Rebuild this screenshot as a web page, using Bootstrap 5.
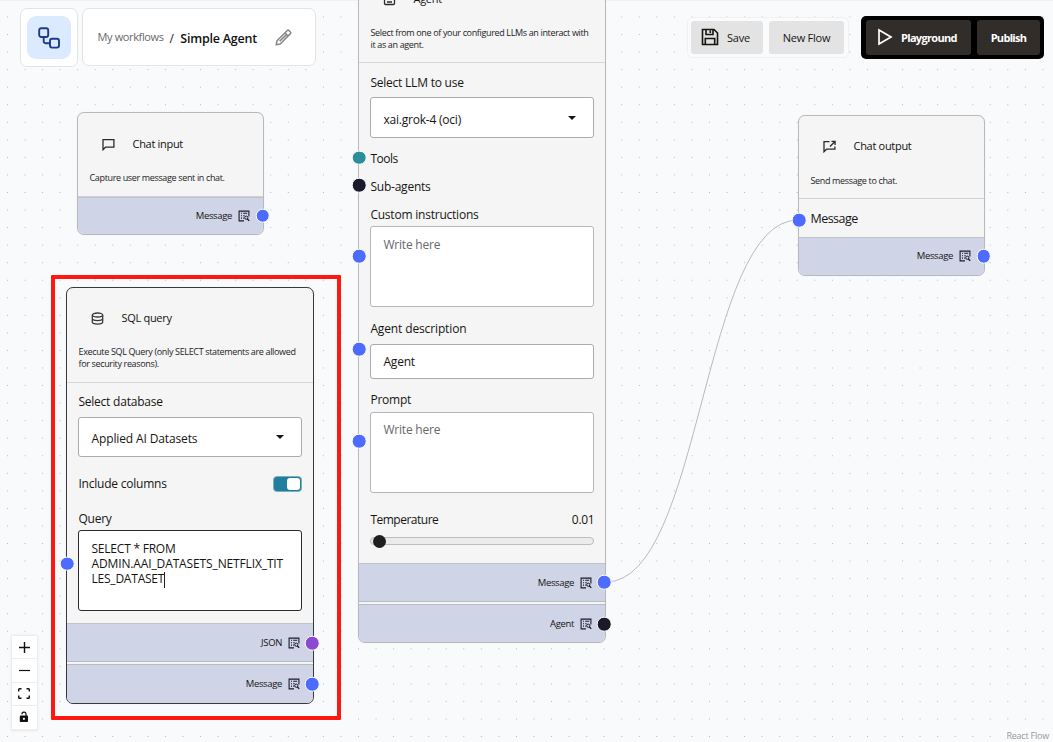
<!DOCTYPE html>
<html lang="en">
<head>
<meta charset="utf-8">
<meta name="viewport" content="width=device-width, initial-scale=1">
<title>Simple Agent</title>
<link rel="stylesheet" href="https://cdn.jsdelivr.net/npm/bootstrap@5.3.0/dist/css/bootstrap.min.css">
<style>
body{font-family:"Open Sans","Noto Sans",sans-serif;font-size:12px;line-height:16px;letter-spacing:-.22px;color:#161513;background:#f9fafb}
.canvas{height:742px;background:#f9fafc}
.canvas::before{content:"";position:absolute;inset:0 0 auto;height:1px;background:#f0f1f3}
.ls-wide{letter-spacing:-.13px}.ls-tight{letter-spacing:-.5px}
.edges{inset:0;width:1053px;height:742px;pointer-events:none}
/* toolbar */
.crumbs{left:20px;top:8px;gap:4px}
.panel{background:#fff;border:1px solid #e3e4e6;border-radius:7px}
.logo-box{width:58px;height:59px}
.logo-tile{width:44px;height:43px;border-radius:9px;background:#dbeafe}
.crumb-box{width:234px;height:58px;padding:0 23px 0 14.5px}
.crumb-link{font-size:11px;letter-spacing:-.37px;color:#66686c}
.crumb-sep{margin:3px 6.5px 0 6px}
.crumb-now{font-size:12.5px;font-weight:600;letter-spacing:-.22px;color:#111}
.tools-light{left:687px;top:17px;width:162px;height:41px;padding:3px;gap:6px;border:1px solid #f1f1f3;border-radius:6px;background:#fafbfc}
.tools-dark{left:861px;top:16px;width:183px;height:43px;padding:4px 4px 4px 5px;gap:6px;background:#000;border-radius:5px}
.tool{--bs-btn-font-size:11px;--bs-btn-font-weight:500;--bs-btn-padding-x:0;--bs-btn-padding-y:2px;--bs-btn-border-width:0;--bs-btn-border-radius:3px;padding-bottom:0;letter-spacing:-.25px}
.tool-light,.tool-light:hover{background:#e3e3e3;color:#161513}
.tool-dark,.tool-dark:hover{background:#312d2a;color:#fff;font-weight:700;letter-spacing:-.68px}
/* nodes */
.node{background:#f5f5f5;border:1px solid #b9b9bb;border-radius:7px;box-shadow:0 0 1px rgba(0,0,0,.12)}
.node.selected{border-color:#3a3a3c}
.node-head{height:84px;border-bottom:1px solid #d0d1d3;padding:0 11.5px}
.node-head.tall{height:95px;border-bottom-color:#d6d7d9}
.node-title{height:62px;padding-left:12px;gap:18px;font-size:11px;font-weight:500;letter-spacing:-.3px;color:#111}
.raised .node-title{height:60px}
.raised .node-desc{margin-top:-1.500px}
.selected .node-desc{margin-top:-2px}
.node-desc{font-size:9px;line-height:12px;letter-spacing:-.35px;color:#1c1c1e;white-space:nowrap;margin-top:-3px}
.node-body{padding:0 11px}
.node-body>div:not(.field):not(.track){position:relative;top:.5px;left:.4px}
.field{background:#fff;border:1px solid #aaabad;border-radius:3px;padding:0 12.5px}
.field-area{height:81px;padding-top:10px;line-height:16px;border-color:#b5b6b8}
.field-focus{border-color:#2b2b2d}
.ph{color:#66686a}
.caret{width:0;border:4px solid transparent;border-top:4.5px solid #161513;border-bottom:0;margin:-4px 5px 0 0}
.cursor{display:inline-block;width:1px;height:16px;margin-bottom:-2px;background:#222;vertical-align:-3px}
.out{background:#d0d4e7;border-top:1px solid #c1c3cb;font-size:9.5px;letter-spacing:-.35px;gap:6px;padding-right:13px}
.out + .out{border-top-color:#b9bbc4}
.out:last-of-type{border-radius:0 0 6px 6px}
.out-mid{border-bottom:1px solid #b9bbc4}
.port{width:14.6px;height:14.6px;border:1px solid #fff;border-radius:50%;background:#4d6bfe;transform:translate(-50%,-50%)}
.port.teal{background:#2b8f9a}.port.dark{background:#1a1a2b}.port.purple{background:#8b4bd0}
.switch{width:29px;height:16px;border:1px solid #7aaebf;border-radius:4px;background:#227e9e}
.knob{width:13px;height:12px;border-radius:3px;background:#fff;margin:1px}
.track{height:8px;border:1px solid #bdbdbf;border-radius:4px;background:#ebebeb}
.thumb{width:13px;height:13px;border-radius:50%;background:#1f1f1f;left:2px;top:-3.5px}
.marker{left:51px;top:275px;width:290px;height:445px;border:4px solid #fe1811;pointer-events:none;border-radius:1px}
.zoomer{left:12px;top:636px;width:24.5px;box-shadow:0 0 2px 1px rgba(0,0,0,.08)}
.zoomer div{height:23.4px;background:#fff;border-bottom:1px solid #eee}
.credit{right:0;bottom:0;padding:1px 4px 0 3px;line-height:13px;font-size:9px;color:#999;background:#fafbfc}
</style>
</head>
<body class="m-0 overflow-hidden">
<svg class="d-none">
  <symbol id="peek" viewBox="0 0 12 12"><path d="M10.900 6.500V1.100H1.100v9.800H6M3 3.300h1M5.200 3.300h4M3 5.700h1M5.200 5.700h1.500M3 8.100h1M5.200 8.100h1" fill="none" stroke="#161b26" stroke-width="1.100"/><circle cx="8.300" cy="7.700" r="1.600" fill="none" stroke="#161b26"/><path d="M9.300 8.800l1.900 2.100" stroke="#161b26" stroke-width="1.300"/></symbol>
</svg>
<main class="canvas position-relative overflow-hidden">
  <svg class="edges position-absolute" fill="none">
    <defs><pattern id="dots" width="17.550" height="17.550" patternUnits="userSpaceOnUse" x="7" y="16.500"><circle cx=".5" cy=".5" r=".5" fill="#9fa1a8"/></pattern></defs>
    <rect width="1053" height="742" fill="url(#dots)"/>
    <path d="M606 582C702 582 702 220 798 220" stroke="#b9babf"/>
  </svg>

  <header class="crumbs position-absolute d-flex align-items-start">
    <div class="panel logo-box d-flex align-items-center justify-content-center">
      <div class="logo-tile d-flex align-items-center justify-content-center">
        <svg width="22" height="22" viewBox="0 0 22 22" fill="none" stroke="#1e3a8a" stroke-width="1.900"><rect x="1.200" y="1.200" width="9" height="8.800" rx="2"/><rect x="12" y="11.800" width="9" height="8.800" rx="2"/><path d="M5.700 10v4.200a2 2 0 0 0 2 2H12"/></svg>
      </div>
    </div>
    <div class="panel crumb-box d-flex align-items-center">
      <span class="crumb-link">My workflows</span><span class="crumb-sep">/</span><span class="crumb-now mt-1">Simple Agent</span>
      <svg class="ms-auto" width="17" height="17" viewBox="0 0 17 17" fill="none" stroke="#858588" stroke-width="1.500" stroke-linejoin="round"><path d="M1.200 15.800l.8-4L12.300 1.500q.8-.7 1.600 0l1.500 1.500q.7.8 0 1.600L5.200 15zM10 4l3 3M4.600 12.300l6.300-6.200"/></svg>
    </div>
  </header>

  <div class="tools-light position-absolute d-flex">
    <button class="btn tool tool-light d-flex align-items-center" style="width:72px;padding-left:10px;gap:8px">
      <svg style="margin-top:-3px" width="18" height="18" viewBox="0 0 18 18" fill="none" stroke="#161513" stroke-width="1.600"><path d="M1.500 1.500h11.500l3.500 3.500v11.500h-15zM5 1.500v5h7v-5M9.300 2.500v2.500M4.300 16.500v-6h9.400v6"/></svg>Save</button>
    <button class="btn tool tool-light" style="width:75px">New Flow</button>
  </div>
  <div class="tools-dark position-absolute d-flex">
    <button class="btn tool tool-dark d-flex align-items-center" style="width:105px;padding-left:11px;gap:8px">
      <svg style="margin-top:-3px" width="16" height="18" viewBox="0 0 16 18" fill="none" stroke="#fff" stroke-width="1.700"><path d="M2 2L14 9 2 16z"/></svg>Playground</button>
    <button class="btn tool tool-dark" style="width:63px">Publish</button>
  </div>

  <section class="node position-absolute" style="left:77px;top:112px;width:187px;height:123px">
    <div class="node-head">
      <div class="node-title d-flex align-items-center">
        <svg width="13" height="13" viewBox="0 0 13 13" fill="none" stroke="#2b2b2d" stroke-width="1.300"><path d="M1 11.700V1.700h10.900v7.500H3.500z"/></svg>Chat input</div>
      <div class="node-desc">Capture user message sent in chat.</div>
    </div>
    <div class="out d-flex align-items-center justify-content-end" style="height:37px">Message<svg width="12" height="12"><use href="#peek"/></svg></div>
    <i class="port position-absolute" style="left:184.700px;top:102.500px"></i>
  </section>

  <section class="node position-absolute" style="left:358px;top:-33px;width:248px;height:676px">
    <div class="node-head tall">
      <div class="node-title d-flex align-items-center">
        <svg width="13" height="13" viewBox="0 0 13 13" fill="none" stroke="#2b2b2d" stroke-width="1.300"><rect x="1.500" y="3" width="10" height="8.500" rx="1"/><path d="M6.500 0v3M4.500 6v1M8.500 6v1M4 9h5"/></svg>Agent</div>
      <div class="node-desc">Select from one of your configured LLMs an interact with<br>it as an agent.</div>
    </div>
    <div class="node-body" style="height:500px;padding-top:11px">
      <div>Select LLM to use</div>
      <div class="field d-flex align-items-center justify-content-between" style="height:41px;margin-top:7px;padding-top:4px"><span>xai.grok-4 (oci)</span><i class="caret"></i></div>
      <div class="ls-tight" style="margin-top:12px">Tools</div>
      <div style="margin-top:12px">Sub-agents</div>
      <div style="margin-top:12px">Custom instructions</div>
      <div class="field field-area ph" style="margin-top:4px">Write here</div>
      <div class="ls-wide" style="margin-top:13px">Agent description</div>
      <div class="field d-flex align-items-center" style="height:35px;margin-top:8px;padding-top:1px">Agent</div>
      <div style="margin-top:12px">Prompt</div>
      <div class="field field-area ph" style="margin-top:5px;padding-top:9px">Write here</div>
      <div class="d-flex justify-content-between ls-tight" style="margin-top:18px"><span>Temperature</span><span style="letter-spacing:-.3px">0.01</span></div>
      <div class="track position-relative" style="margin-top:10px"><i class="thumb position-absolute"></i></div>
    </div>
    <div class="out out-mid d-flex align-items-center justify-content-end" style="height:39px">Message<svg width="12" height="12"><use href="#peek"/></svg></div>
    <div class="out d-flex align-items-center justify-content-end" style="height:38px;margin-top:2px">Agent<svg width="12" height="12"><use href="#peek"/></svg></div>
    <i class="port teal position-absolute" style="left:0;top:189.500px"></i>
    <i class="port dark position-absolute" style="left:0;top:217px"></i>
    <i class="port position-absolute" style="left:0;top:288.300px"></i>
    <i class="port position-absolute" style="left:0;top:381px"></i>
    <i class="port position-absolute" style="left:0;top:473.300px"></i>
    <i class="port position-absolute" style="left:245.300px;top:614.300px"></i>
    <i class="port dark position-absolute" style="left:245.300px;top:656px"></i>
  </section>

  <section class="node raised position-absolute" style="left:798px;top:115px;width:187px;height:161px">
    <div class="node-head" style="height:83px">
      <div class="node-title d-flex align-items-center">
        <svg width="13" height="13" viewBox="0 0 13 13" fill="none" stroke="#2b2b2d" stroke-width="1.300"><path d="M6.500 1.700H1v10l2.500-2.500h8.400V6.500M7 6.500L11.700 1.700M8.500 1.400h3.600V5"/></svg>Chat output</div>
      <div class="node-desc">Send message to chat.</div>
    </div>
    <div class="node-body d-flex align-items-center ls-tight" style="height:38px;font-size:12.500px"><div>Message</div></div>
    <div class="out d-flex align-items-center justify-content-end" style="height:38px;padding-bottom:1px">Message<svg width="12" height="12"><use href="#peek"/></svg></div>
    <i class="port position-absolute" style="left:0;top:104px"></i>
    <i class="port position-absolute" style="left:184.500px;top:140.300px"></i>
  </section>

  <section class="node raised selected position-absolute" style="left:66px;top:287px;width:248px;height:417px">
    <div class="node-head tall">
      <div class="node-title d-flex align-items-center">
        <svg width="13" height="13" viewBox="0 0 13 13" fill="none" stroke="#3a3a3c" stroke-width="1.300"><ellipse cx="6.500" cy="3" rx="5.200" ry="2"/><path d="M1.300 3v7c0 2.700 10.400 2.700 10.400 0V3M1.300 6.500c0 2.700 10.400 2.700 10.400 0"/></svg>SQL query</div>
      <div class="node-desc">Execute SQL Query (only SELECT statements are allowed<br>for security reasons).</div>
    </div>
    <div class="node-body" style="height:240px;padding-top:10px">
      <div>Select database</div>
      <div class="field d-flex align-items-center justify-content-between ls-wide" style="height:40px;margin-top:8px;padding-top:3px"><span>Applied AI Datasets</span><i class="caret"></i></div>
      <div class="d-flex justify-content-between align-items-center" style="margin-top:18px">Include columns<span class="switch d-flex justify-content-end"><i class="knob"></i></span></div>
      <div style="margin-top:19px">Query</div>
      <div class="field field-area field-focus" style="margin-top:4px;line-height:15px">SELECT * FROM<br><span style="letter-spacing:-.13px">ADMIN.AAI_DATASETS_NETFLIX_TIT</span><br>LES_DATASET<i class="cursor"></i></div>
    </div>
    <div class="out out-mid d-flex align-items-center justify-content-end" style="height:39px">JSON<svg width="12" height="12"><use href="#peek"/></svg></div>
    <div class="out d-flex align-items-center justify-content-end" style="height:39px;margin-top:2px">Message<svg width="12" height="12"><use href="#peek"/></svg></div>
    <i class="port position-absolute" style="left:.3px;top:275.500px"></i>
    <i class="port purple position-absolute" style="left:245.300px;top:355px"></i>
    <i class="port position-absolute" style="left:245.300px;top:396.300px"></i>
  </section>

  <div class="marker position-absolute"></div>

  <nav class="zoomer position-absolute">
    <div class="d-flex align-items-center justify-content-center"><svg width="11" height="11" stroke="#111" stroke-width="1.400"><path d="M5.500 0v11M0 5.500h11"/></svg></div>
    <div class="d-flex align-items-center justify-content-center"><svg width="11" height="11" stroke="#111" stroke-width="1.200"><path d="M0 5.500h11"/></svg></div>
    <div class="d-flex align-items-center justify-content-center"><svg width="12" height="11" fill="none" stroke="#111" stroke-width="1.400"><path d="M.7 3.500V1.500q0-.8.8-.8h2M8.500.7h2q.8 0 .8.800v2M11.300 7.500v2q0 .8-.8.8h-2M3.500 10.300h-2q-.8 0-.8-.8v-2"/></svg></div>
    <div class="d-flex align-items-center justify-content-center"><svg width="10" height="12"><path d="M3 3.300a2 2 0 0 1 4-.5V5" fill="none" stroke="#111" stroke-width="1.200"/><rect x=".8" y="4.600" width="8.200" height="6.400" rx=".8" fill="#111"/><circle cx="4.900" cy="7.800" r="1.100" fill="#fff"/></svg></div>
  </nav>
  <div class="credit position-absolute">React Flow</div>
</main>
<script src="https://cdn.jsdelivr.net/npm/bootstrap@5.3.0/dist/js/bootstrap.bundle.min.js"></script>
</body>
</html>
